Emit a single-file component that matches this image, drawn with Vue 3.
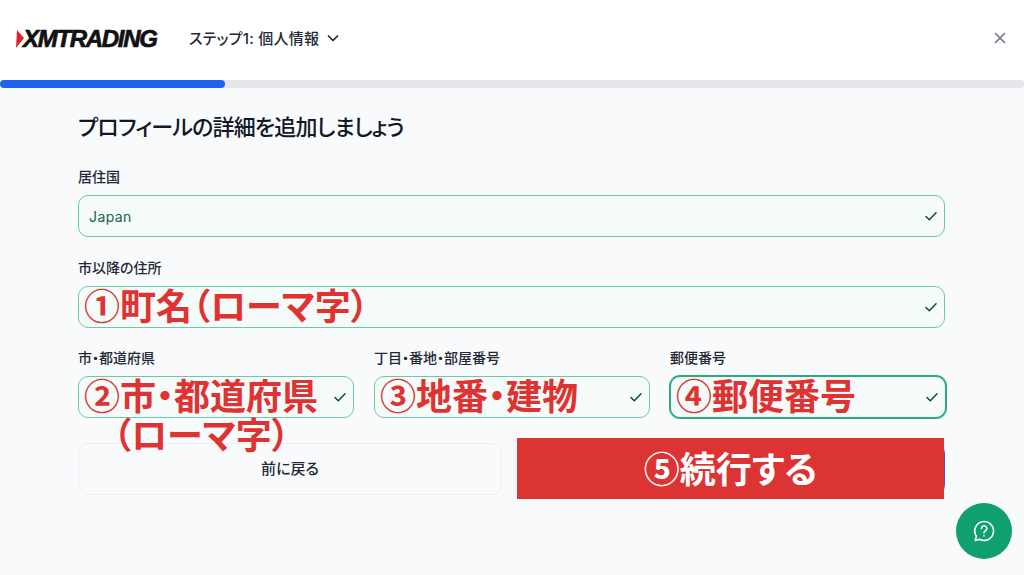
<template>
  <div class="page">
    <header class="top-bar">
      <div class="logo">
        <svg class="logo-mark" width="8" height="18" viewBox="0 0 8 18"><polygon points="1,0 8,8 0,18" fill="#e0232b" /></svg>
        <span class="logo-text">XMTRADING</span>
      </div>
      <div class="step">
        <span>ステップ1: 個人情報</span>
        <svg width="14" height="14" viewBox="0 0 14 14" fill="none" stroke="#1f2937" stroke-width="1.7" stroke-linecap="round" stroke-linejoin="round"><path d="M2.5 5l4.5 4.5L11.5 5" /></svg>
      </div>
      <svg class="close" width="14" height="14" viewBox="0 0 14 14" fill="none" stroke="#6b7280" stroke-width="1.6" stroke-linecap="round"><path d="M2.5 2.5l9 9M11.5 2.5l-9 9" /></svg>
    </header>

    <div class="progress"><div class="progress-fill"></div></div>

    <main class="content">
      <h1>プロフィールの詳細を追加しましょう</h1>

      <div class="field first">
        <label>居住国</label>
        <div class="input">
          <span class="value">Japan</span>
          <svg class="check" width="14" height="14" viewBox="0 0 14 14" fill="none" stroke="#14532d" stroke-width="1.6" stroke-linecap="round" stroke-linejoin="round"><path d="M2 7.5l3.3 3.2L12 3.8" /></svg>
        </div>
      </div>

      <div class="field">
        <label>市以降の住所</label>
        <div class="input">
          <span class="note">①町名（ローマ字）</span>
          <svg class="check" width="14" height="14" viewBox="0 0 14 14" fill="none" stroke="#14532d" stroke-width="1.6" stroke-linecap="round" stroke-linejoin="round"><path d="M2 7.5l3.3 3.2L12 3.8" /></svg>
        </div>
      </div>

      <div class="row">
        <div class="field">
          <label>市・都道府県</label>
          <div class="input">
            <span class="note">②市・都道府県</span>
            <svg class="check" width="14" height="14" viewBox="0 0 14 14" fill="none" stroke="#14532d" stroke-width="1.6" stroke-linecap="round" stroke-linejoin="round"><path d="M2 7.5l3.3 3.2L12 3.8" /></svg>
            <span class="note note-below">（ローマ字）</span>
          </div>
        </div>
        <div class="field">
          <label>丁目・番地・部屋番号</label>
          <div class="input">
            <span class="note">③地番・建物</span>
            <svg class="check" width="14" height="14" viewBox="0 0 14 14" fill="none" stroke="#14532d" stroke-width="1.6" stroke-linecap="round" stroke-linejoin="round"><path d="M2 7.5l3.3 3.2L12 3.8" /></svg>
          </div>
        </div>
        <div class="field">
          <label>郵便番号</label>
          <div class="input focused">
            <span class="note">④郵便番号</span>
            <svg class="check" width="14" height="14" viewBox="0 0 14 14" fill="none" stroke="#14532d" stroke-width="1.6" stroke-linecap="round" stroke-linejoin="round"><path d="M2 7.5l3.3 3.2L12 3.8" /></svg>
          </div>
        </div>
      </div>

      <div class="actions">
        <button class="back">前に戻る</button>
        <button class="next">
          <span class="next-cover">⑤続行する</span>
        </button>
      </div>
    </main>

    <button class="help" aria-label="help">
      <svg width="24" height="24" viewBox="0 0 24 24" fill="none" stroke="#fff" stroke-width="1.6" stroke-linecap="round" stroke-linejoin="round">
        <path d="M12 2.5a9.5 9.5 0 1 1-4.6 17.8L3.2 21.4l1.2-4.1A9.5 9.5 0 0 1 12 2.5z" />
        <path d="M9.4 9.4a2.7 2.7 0 1 1 4.2 2.3c-.9.6-1.6 1.1-1.6 2.2" />
        <path d="M12 16.9v.1" />
      </svg>
    </button>
  </div>
</template>

<script setup>
</script>

<style>
html, body {
  margin: 0;
  background: #f9fafb;
}
</style>

<style scoped>
.page {
  height: 575px;
  overflow: hidden;
  background: #f9fafb;
  font-family: Inter, "Noto Sans CJK JP", sans-serif;
  font-feature-settings: "palt";
  color: #1f2937;
}

.top-bar {
  height: 80px;
  background: #fff;
  display: flex;
  align-items: center;
  padding: 0 17px 4px 16px;
  box-sizing: border-box;
}

.logo {
  display: flex;
  align-items: center;
  width: 173px;
  margin-top: 2px;
}

.logo-mark {
  margin-right: -1px;
}

.logo-text {
  font-family: "Liberation Sans", sans-serif;
  font-size: 24px;
  font-weight: 700;
  font-style: italic;
  letter-spacing: -1.3px;
  color: #111;
  -webkit-text-stroke: 0.7px #111;
}

.step {
  display: flex;
  align-items: center;
  gap: 7px;
  margin-top: -1px;
  font-size: 15px;
  font-weight: 500;
  letter-spacing: 0.25px;
}

.close {
  margin-left: auto;
}

.progress {
  height: 8px;
  background: #e5e7eb;
  border-radius: 4px;
}

.progress-fill {
  width: 225px;
  height: 8px;
  background: #1d63ed;
  border-radius: 4px;
}

.content {
  padding: 0 79px 0 78px;
}

h1 {
  margin: 0;
  padding-top: 24px;
  font-size: 22px;
  line-height: 30px;
  font-weight: 500;
  color: #111827;
  letter-spacing: -0.8px;
}

.field {
  min-width: 0;
  margin-top: 22px;
}

.field.first {
  margin-top: 26px;
}

label {
  display: block;
  height: 18px;
  line-height: 18px;
  margin-bottom: 9px;
  font-size: 14px;
  font-weight: 500;
  color: #1f2937;
}

.input {
  position: relative;
  height: 42px;
  box-sizing: border-box;
  display: flex;
  align-items: center;
  padding: 0 6px 0 10px;
  border: 1px solid #6cc9a5;
  border-radius: 10px;
  background: #f4fbf8;
}

.input.focused {
  border-color: #2eaa80;
  box-shadow: 0 0 0 1px #2eaa80;
}

.value {
  font-size: 14px;
  color: #166548;
  letter-spacing: 0.4px;
}

.check {
  margin-left: auto;
  flex: none;
}

.note {
  font-family: "Noto Sans CJK JP", sans-serif;
  font-size: 36px;
  line-height: 36px;
  font-weight: 700;
  color: #df3232;
  white-space: nowrap;
  margin-left: -5px;
  margin-top: -6px;
}

.note-below {
  position: absolute;
  left: 34px;
  top: 38px;
  z-index: 2;
  margin: 0;
}

.row {
  display: grid;
  grid-template-columns: 276px 276px 276px;
  gap: 20px;
  margin-top: 21px;
}

.row .field {
  margin-top: 0;
}

.actions {
  display: grid;
  grid-template-columns: 424px 428px;
  gap: 15px;
  margin-top: 25px;
}

.back {
  height: 52px;
  padding: 0 0 4px;
  border: 1px solid #eceef1;
  border-radius: 10px;
  background: #f9fafb;
  font-family: inherit;
  font-feature-settings: inherit;
  font-size: 15px;
  font-weight: 500;
  color: #1f2937;
}

.next {
  position: relative;
  height: 52px;
  padding: 0;
  border: none;
  border-radius: 10px;
  background: #4a55d8;
  font-family: inherit;
}

/* red block pasted over the blue button */
.next-cover {
  position: absolute;
  left: 0;
  right: 1px;
  top: -5px;
  bottom: -4px;
  display: flex;
  align-items: center;
  justify-content: center;
  padding-bottom: 4px;
  box-sizing: border-box;
  background: #dc3333;
  font-family: "Noto Sans CJK JP", sans-serif;
  font-feature-settings: "palt";
  font-size: 36px;
  font-weight: 700;
  color: #fff;
}

.help {
  position: fixed;
  left: 956px;
  top: 503px;
  width: 56px;
  height: 56px;
  padding: 0;
  border: none;
  border-radius: 50%;
  background: #0fa06e;
  display: flex;
  align-items: center;
  justify-content: center;
}
</style>
